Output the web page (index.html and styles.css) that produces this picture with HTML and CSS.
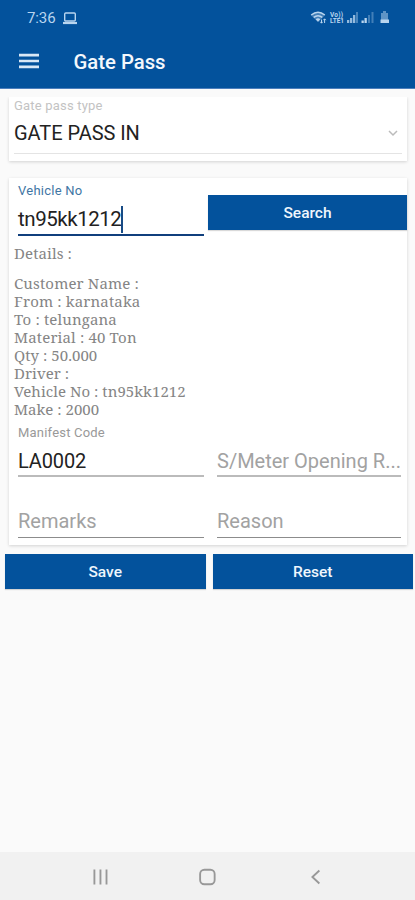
FILE: index.html
```html
<!DOCTYPE html>
<html lang="en">
<head>
<meta charset="utf-8">
<title>Gate Pass</title>
<link rel="stylesheet" href="styles.css">
</head>
<body>
<header class="top">
  <div class="status">
    <span class="clock">7:36</span>
    <svg class="laptop" width="16" height="13" viewBox="0 0 16 13"><rect x="2.700" y="1" width="10.600" height="8" rx="1" fill="none" stroke="currentColor" stroke-width="1.400"/><path d="M1 11h14" stroke="currentColor" stroke-width="2.200"/></svg>
    <svg class="signals" width="82" height="16" viewBox="0 0 82 16" fill="currentColor">
      <path d="M1 5.200Q8 -.8 15 5.200L8 12Z" opacity=".35"/>
      <path d="M1.200 5Q8 -.5 14.800 5M3.700 7.400Q8 4 12.300 7.400" fill="none" stroke="currentColor" stroke-width="1.500"/>
      <path d="M5.700 9.200Q8 7.400 10.300 9.200L8 11.700Z"/>
      <path d="M11.500 13V9.500M10.300 11.800l1.200 1.400 1.200-1.400M14.600 13V9M13.400 10.200l1.200-1.400 1.200 1.400" fill="none" stroke="currentColor"/>
      <text class="volte" x="20" y="7" textLength="13">Vo))</text>
      <text class="volte" x="20" y="13.300" textLength="14">LTE1</text>
      <path d="M37 10h2.300v3H37zM40 8h2.300v5H40zM43 5h2.300v8H43z" opacity=".8"/><path d="M46 2h2v11h-2z" opacity=".4"/>
      <path d="M51.500 10.500h2.300V13h-2.300zM54.500 8h2.300v5h-2.300z"/><path d="M58 5h2v8h-2zM61.500 2h2v11h-2z" opacity=".35"/>
      <path d="M73 1h3v2h2v7h-7V3h2z" opacity=".5"/><path d="M70.500 9.500h8.500V13h-8.500z"/>
    </svg>
  </div>
  <div class="appbar">
    <svg class="menu" width="20" height="16" viewBox="0 0 20 16"><path d="M0 2.200h20M0 8h20M0 13.800h20" stroke="currentColor" stroke-width="2.700"/></svg>
    <h1>Gate Pass</h1>
  </div>
</header>
<main>
  <section class="card type">
    <div class="label">Gate pass type</div>
    <div class="select"><span>GATE PASS IN</span>
      <svg width="10" height="8" viewBox="0 0 10 8"><path d="M1 2l4 4 4-4" fill="none" stroke="#bbb" stroke-width="1.500"/></svg>
    </div>
  </section>
  <section class="card form">
    <div class="lookup">
      <div class="field active">
        <div class="label">Vehicle No</div>
        <div class="value"><span class="vehicle">tn95kk1212</span><i class="caret"></i></div>
      </div>
      <button class="search">Search</button>
    </div>
    <div class="details">
      <p class="heading">Details :</p>
      <p class="wide">Customer Name :</p>
      <p class="wide">From : karnataka</p>
      <p class="wide">To : telungana</p>
      <p class="wide">Material : 40 Ton</p>
      <p>Qty : 50.000</p>
      <p>Driver :</p>
      <p>Vehicle No : tn95kk1212</p>
      <p>Make : 2000</p>
    </div>
    <div class="fields">
      <div class="field"><div class="label manifest">Manifest Code</div><div class="value code">LA0002</div></div>
      <div class="field"><div class="label"></div><div class="value hint">S/Meter Opening R...</div></div>
      <div class="field thin"><div class="value hint">Remarks</div></div>
      <div class="field thin"><div class="value hint">Reason</div></div>
    </div>
  </section>
  <div class="actions"><button>Save</button><button>Reset</button></div>
</main>
<nav>
  <svg width="16" height="16" viewBox="0 0 16 16"><path d="M1.500 0v16M8 0v16M14.500 0v16" stroke="currentColor" stroke-width="2"/></svg>
  <svg width="18" height="18" viewBox="0 0 18 18"><rect x="1.200" y="1.200" width="15.600" height="15.600" rx="4.500" fill="none" stroke="currentColor" stroke-width="2"/></svg>
  <svg width="10" height="16" viewBox="0 0 10 16"><path d="M9 1L1.500 8 9 15" fill="none" stroke="currentColor" stroke-width="2"/></svg>
</nav>
</body>
</html>
```
FILE: styles.css
```css
* { box-sizing: border-box; }
body { margin: 0; height: 900px; display: flex; flex-direction: column; background: #fafafa; font-family: Roboto, sans-serif; color: #222; overflow: hidden; }
.top { height: 89px; background: #03529c; border-bottom: 1px solid #4c7fbd; color: #d9e8f6; }
.status { height: 36px; display: flex; align-items: center; padding: 0 23px 0 27px; color: #b9d5ef; }
.clock { font-size: 15px; letter-spacing: -.1px; }
.laptop { margin-left: 6px; }
.signals { margin-left: auto; }
.volte { font: 700 6.500px Roboto, sans-serif; }
.appbar { height: 50px; display: flex; align-items: center; padding-left: 18.500px; }
.appbar h1 { margin: 1px 0 0 35px; font-size: 20.300px; font-weight: 500; color: #f4f8fc; }
main { flex: 1; padding-top: 8px; }
.card { margin: 0 8px 0 9px; background: #fff; box-shadow: 0 1px 3px rgba(0,0,0,.16); }
.label { font-size: 13px; line-height: 16px; height: 16px; color: #999; white-space: nowrap; }
.type { height: 64px; padding: 1px 5px 0; clip-path: inset(0 -4px -5px -4px); }
.type .label { color: #c3c3c3; letter-spacing: .2px; }
.select { display: flex; justify-content: space-between; align-items: center; height: 40px; padding: 0 4px 1px 0; border-bottom: 1px solid #e4e4e4; font-size: 20px; letter-spacing: -.05px; }
.form { margin-top: 17px; height: 367px; }
.lookup { display: flex; height: 66px; padding-left: 9px; }
.field { width: 186px; }
.lookup .field { height: 58px; padding-top: 5px; border-bottom: 2px solid #103f7d; }
.lookup .label { color: #3f76a4; letter-spacing: .25px; }
.value { font-size: 20px; line-height: 24px; white-space: nowrap; }
.active .value { display: flex; align-items: center; margin-top: 6px; font-size: 20.500px; line-height: 28px; }
.vehicle { letter-spacing: -.45px; }
.caret { width: 2px; height: 27px; background: #174b85; }
button { border: 0; padding: 0; background: #03529c; color: #eff6fd; font: 500 15.500px Roboto, sans-serif; box-shadow: 0 1px 1px rgba(0,0,0,.15); }
.search { width: 199px; height: 35px; margin: 17px 0 0 4px; }
.details { padding-left: 5px; font: 15px/18px "Noto Serif", "DejaVu Serif Condensed", "DejaVu Serif", serif; font-stretch: condensed; color: #858585; letter-spacing: .05px; }
.details p { margin: 0; white-space: nowrap; }
.details .heading { margin-bottom: 12px; letter-spacing: .1px; }
.details .wide { letter-spacing: .14px; }
.fields { padding: 7px 6px 0 9px; display: grid; grid-template-columns: 186px 184px; justify-content: space-between; }
.fields .field { width: auto; border-bottom: 2px solid #bbb; height: 52px; }
.fields .label { margin-bottom: 8px; }
.manifest { letter-spacing: .2px; }
.code { letter-spacing: -.15px; }
.fields .thin { height: 61px; border-bottom: 1px solid #8c8c8c; padding-top: 32px; }
.hint { color: #a2a2a2; }
.actions { display: flex; gap: 7px; padding: 9px 2px 0 5px; }
.actions button { flex: 1; height: 35px; }
nav { height: 48px; background: #f1f1f1; color: #989898; display: flex; align-items: center; padding: 2px 0 0 93px; }
nav svg { margin-right: 91px; }
nav svg + svg { margin-right: 95px; }
```
